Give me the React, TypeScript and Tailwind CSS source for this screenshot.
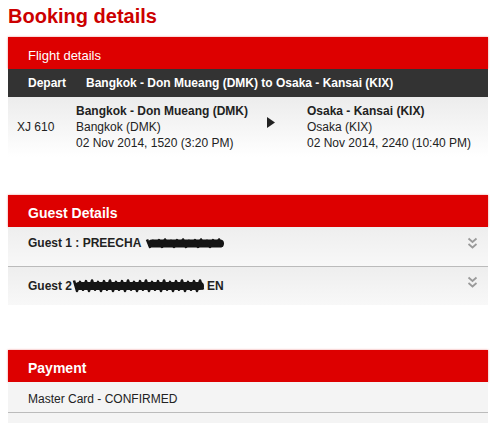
import React from 'react';

const red = 'bg-[#dd0000] shadow-[0_0_2px_rgba(221,0,0,0.45)]';

const Scribble: React.FC<{ w: number; h: number }> = ({ w, h }) => {
  const pts: string[] = [];
  for (let x = 2, i = 0; x < w - 2; x += 3, i++) {
    const y = i % 2 === 0 ? 2.5 + (i % 3) * 0.7 : h - 2.5 - (i % 4) * 0.6;
    pts.push(`${x},${y}`);
  }
  return (
    <svg width={w} height={h} viewBox={`0 0 ${w} ${h}`} className="block">
      <rect x="3" y={h / 2 - 4} width={w - 6} height="8" rx="4" fill="#151515" />
      <polyline points={pts.join(' ')} fill="none" stroke="#151515" strokeWidth="2.6" strokeLinejoin="round" />
    </svg>
  );
};

const Chevrons: React.FC = () => (
  <svg width="11" height="12" viewBox="0 0 11 12" className="block">
    <polyline points="1.5,1.5 5.5,5 9.5,1.5" fill="none" stroke="#9a9a9a" strokeWidth="1.8" />
    <polyline points="1.5,7 5.5,10.5 9.5,7" fill="none" stroke="#9a9a9a" strokeWidth="1.8" />
  </svg>
);

const SectionHeader: React.FC<{ title: string; bold?: boolean }> = ({ title, bold }) => (
  <div className={`h-[32px] flex items-center pl-5 text-white ${red} ${bold ? 'text-[14px] font-bold pt-[4px]' : 'text-[13px] pt-[6px]'}`}>
    {title}
  </div>
);

const App: React.FC = () => {
  return (
    <div className="w-[498px] h-[423px] overflow-hidden bg-white text-[12px] text-[#222]" style={{ fontFamily: '"Liberation Sans", Arial, sans-serif' }}>
      <h1 className="pt-[2px] pl-2 text-[20px] leading-[28px] font-bold text-[#cc0000]">Booking details</h1>

      <div className="ml-2 w-[480px] mt-[7px]">
        <SectionHeader title="Flight details" />
        <div className="h-[28px] flex items-center bg-[#333] text-white font-bold pl-5">
          <span className="w-[58px]">Depart</span>
          <span>Bangkok - Don Mueang (DMK) to Osaka - Kansai (KIX)</span>
        </div>
        <div className="h-[60px] flex items-center pl-[9px] bg-gradient-to-b from-[#ececec] to-white leading-4">
          <div className="w-[59px]">XJ 610</div>
          <div className="w-[191px]">
            <div className="font-bold">Bangkok - Don Mueang (DMK)</div>
            <div>Bangkok (DMK)</div>
            <div>02 Nov 2014, 1520 (3:20 PM)</div>
          </div>
          <div className="w-[40px] self-start pt-[20px]">
            <svg width="8" height="11" viewBox="0 0 8 11" className="block">
              <polygon points="0,0 8,5.5 0,11" fill="#222" />
            </svg>
          </div>
          <div>
            <div className="font-bold">Osaka - Kansai (KIX)</div>
            <div>Osaka (KIX)</div>
            <div>02 Nov 2014, 2240 (10:40 PM)</div>
          </div>
        </div>

        <div className="mt-[38px]">
          <SectionHeader title="Guest Details" bold />
          <div className="h-[40px] flex justify-between pl-5 pr-[10px] leading-4 font-bold bg-gradient-to-b from-[#eeeeee] to-[#f8f8f8] border-b border-[#bbb]">
            <div className="flex items-center gap-1 pt-[8px] self-start">
              <span>Guest 1 : PREECHA</span>
              <Scribble w={82} h={13} />
            </div>
            <div className="pt-[10px]"><Chevrons /></div>
          </div>
          <div className="h-[38px] flex justify-between pl-5 pr-[10px] leading-4 font-bold bg-gradient-to-b from-[#eeeeee] to-[#f8f8f8]">
            <div className="flex items-center pt-[11px] self-start">
              <span>Guest 2</span>
              <Scribble w={135} h={16} />
              <span>EN</span>
            </div>
            <div className="pt-[9px]"><Chevrons /></div>
          </div>
        </div>

        <div className="mt-[45px]">
          <SectionHeader title="Payment" bold />
          <div className="h-[31px] pl-5 pt-[9px] leading-4 bg-[#f4f4f4] border-b border-[#bbb]">Master Card - CONFIRMED</div>
          <div className="h-[20px] bg-[#f4f4f4]" />
        </div>
      </div>
    </div>
  );
};

export default App;
